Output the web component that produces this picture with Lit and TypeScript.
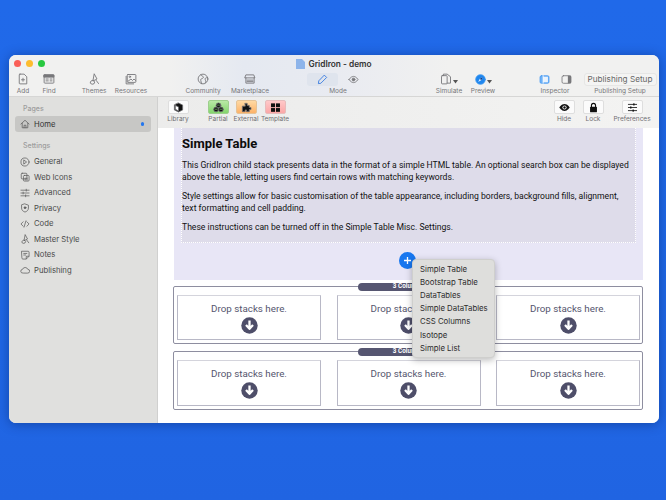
import { LitElement, html, css, svg } from "lit";
import { customElement } from "lit/decorators.js";

const ic = (body: unknown, size = 12, cls = "ic") => html`<svg class=${cls} width=${size} height=${size} viewBox="0 0 16 16" fill="none" stroke="currentColor" stroke-width="1.2" stroke-linecap="round" stroke-linejoin="round">${body}</svg>`;

const icons: Record<string, unknown> = {
  add: svg`<path d="M4 1.500h5.500L13 5v9.500H4a1 1 0 0 1-1-1v-11a1 1 0 0 1 1-1z"/><path d="M8 7v4M6 9h4"/>`,
  find: svg`<rect x="1.500" y="2.500" width="13" height="11" rx="1"/><rect x="1.500" y="2.500" width="13" height="3" fill="currentColor"/><path d="M4 8h3M4 10.500h3M9.500 8H12M9.500 10.500H12"/>`,
  themes: svg`<path d="M8.500 1.500 12 8l-5 2.500z"/><path d="M3 13a3 3 0 0 1 4-3l2 2a3 3 0 0 1-3 3z"/><path d="M11 10l3 4"/>`,
  resources: svg`<rect x="3" y="2" width="11.500" height="10.500" rx="1"/><path d="M1.500 4.500v10h10"/><circle cx="6.500" cy="5" r="1"/><path d="M4 11l4-3 2 2 2-2 2 2"/>`,
  community: svg`<circle cx="8" cy="8" r="6.500"/><path d="M5 2.500c1 2 4 1.500 3.500 3.500S4 7 5 10l1 4M14 6c-2 0-4 1-3 3s1 3 0 4"/>`,
  market: svg`<path d="M3 2.500h10l1.500 4H1.500z"/><path d="M2.500 6.500v7h11v-7"/><path d="M4 9.500h8M4 11.500h8"/>`,
  pencil: svg`<path d="M11 2l3 3-8.500 8.500L2 14l.500-3.500z"/>`,
  eye: svg`<path d="M1.500 8S4 3.500 8 3.500 14.500 8 14.500 8 12 12.500 8 12.500 1.500 8 1.500 8z"/><circle cx="8" cy="8" r="2" fill="currentColor"/>`,
  simulate: svg`<rect x="2" y="3.500" width="7.500" height="11" rx="1"/><path d="M4.500 3.500V1.500h5L14 5v8.500H9.500"/>`,
  general: svg`<circle cx="8" cy="8" r="6.500"/><path d="M6.500 5l4 3-4 3z"/>`,
  webicons: svg`<rect x="2" y="2" width="9" height="9" rx="1.500"/><rect x="5.500" y="5.500" width="9" height="9" rx="1.500"/><path d="M8 10h4M8 12.500h4"/>`,
  advanced: svg`<path d="M1.500 3.500h13M1.500 8h13M1.500 12.500h13"/><path d="M10 2v3M5 6.500v3M9 11v3"/>`,
  privacy: svg`<path d="M8 1.500l5.500 2v4.500c0 3.500-2.500 5.500-5.500 6.500-3-1-5.500-3-5.500-6.500V3.500z"/><circle cx="8" cy="7.500" r="1.500" fill="currentColor"/>`,
  code: svg`<path d="M5 4.500 1.500 8 5 11.500M11 4.500 14.500 8 11 11.500M9.500 3l-3 10"/>`,
  notes: svg`<path d="M3 2h10a1.500 1.500 0 0 1 1.500 1.500V10L10 14.500H4.500A1.500 1.500 0 0 1 3 13z"/><path d="M6 5.500h5M6 8h3M10 14v-4h4"/>`,
  cloud: svg`<path d="M4.500 13a3 3 0 0 1-.500-6A4.500 4.500 0 0 1 12.500 7a3 3 0 0 1 0 6z"/>`,
  home: svg`<path d="M1.500 8 8 2l6.500 6"/><path d="M3.500 7v7h9V7"/><path d="M6.500 14v-4h3v4"/>`,
  inspL: svg`<rect x="1.500" y="2.500" width="13" height="11" rx="2" fill="#6db1f7" stroke="#4c9df3"/><rect x="6" y="4" width="7" height="8" fill="#eaf3fd" stroke="none"/><path d="M6 2.500v11" stroke="#fff"/>`,
  inspR: svg`<rect x="1.500" y="2.500" width="13" height="11" rx="2"/><rect x="10" y="2.500" width="4.500" height="11" fill="currentColor" stroke="none"/>`,
  preview: svg`<circle cx="8" cy="8" r="7" fill="#1f86ee" stroke="#3f9af2"/><path d="M11.500 4.500 9 9 4.500 11.500 7 7z" fill="#dbeafe" stroke="none"/><path d="M11.500 4.500 9 9 7 7z" fill="#153e86" stroke="none"/>`,
};

const filled = {
  library: svg`<path d="M8 1.500 14 4.500v7l-6 3-6-3v-7z" fill="#111"/><path d="M3.500 5 8 7.200V13l-4.500-2.300z" fill="#fff"/>`,
  partial: svg`<circle cx="8" cy="4.800" r="3.400" fill="#111"/><circle cx="4.500" cy="10.800" r="3.500" fill="#111"/><circle cx="11.500" cy="10.800" r="3.500" fill="#111"/><path d="M6.500 4.500h3M3 10.500h3M10 10.500h3" stroke="#8fdc7c" stroke-width=".9"/>`,
  external: svg`<path d="M6 2h3v3h3v3h2.500v3H12v3H8v-2.500H6V14H2V6h4z" fill="#111"/>`,
  template: svg`<rect x="1.500" y="2" width="5.800" height="5.500" fill="#111" stroke="none"/><rect x="8.700" y="2" width="5.800" height="5.500" fill="#111" stroke="none"/><rect x="1.500" y="8.800" width="5.800" height="5.500" fill="#111" stroke="none"/><rect x="8.700" y="8.800" width="5.800" height="5.500" fill="#111" stroke="none"/>`,
  hide: svg`<path d="M.500 8S3.500 3 8 3s7.500 5 7.500 5-3 5-7.500 5S.500 8 .500 8z" fill="#111" stroke="none"/><circle cx="8" cy="8" r="3" fill="#fff" stroke="none"/><circle cx="8" cy="8" r="1.800" fill="#111" stroke="none"/>`,
  lock: svg`<rect x="3" y="7" width="10" height="8" rx="1" fill="#111" stroke="none"/><path d="M5 7V5a3 3 0 0 1 6 0v2" fill="none" stroke="#111" stroke-width="1.600"/>`,
  prefs: svg`<path d="M2 3.500h12M2 8h12M2 12.500h12" stroke="#111" stroke-width="1.200"/><rect x="9" y="2" width="2" height="3" fill="#111" stroke="none"/><rect x="4.500" y="6.500" width="2" height="3" fill="#111" stroke="none"/><rect x="8" y="11" width="2" height="3" fill="#111" stroke="none"/>`,
};

const nav: [string, string][] = [
  ["General", "general"],
  ["Web Icons", "webicons"],
  ["Advanced", "advanced"],
  ["Privacy", "privacy"],
  ["Code", "code"],
  ["Master Style", "themes"],
  ["Notes", "notes"],
  ["Publishing", "cloud"],
];

const menu = ["Simple Table", "Bootstrap Table", "DataTables", "Simple DataTables", "CSS Columns", "Isotope", "Simple List"];

@customElement("app-root")
export class AppRoot extends LitElement {
  static styles = css`
    :host { display: block; width: 666px; height: 500px; overflow: hidden; background: linear-gradient(180deg, #2069e9 0%, #2068e6 60%, #2064e2 100%); font-family: Inter, "Liberation Sans", sans-serif; }
    .page { padding: 55px 7px 0 9px; height: 500px; box-sizing: border-box; }
    .win { position: relative; height: 368px; border-radius: 7px; overflow: hidden; background: #fff; display: flex; flex-direction: column; box-shadow: 0 1px 12px rgba(5, 30, 90, .45); }
    .head { height: 42px; box-sizing: border-box; flex: none; background: linear-gradient(90deg, #f1f1f0 160px, #e5e9f1 235px, #e9ebf1 330px, #f1f1f0 440px); border-bottom: 1px solid #d6d6d5; position: relative; }
    .lights { position: absolute; left: 5px; top: 5px; display: flex; gap: 5px; }
    .lights i { width: 7px; height: 7px; border-radius: 50%; display: block; }
    .title { display: flex; justify-content: center; align-items: center; gap: 3px; height: 17px; font-size: 8.300px; font-weight: 600; color: #333; }
    .tools { display: grid; grid-template-columns: 28px 24px 13px 40px 34px 31px 48px 46px 34px 62px 65px 30px 4px 30px 32px 50px 80px; height: 24px; }
    .tool { display: flex; flex-direction: column; align-items: center; color: #77777a; font-size: 6.500px; white-space: nowrap; }
    .tool .box { height: 14px; display: flex; align-items: center; justify-content: center; color: #77777a; }
    .tool span { margin-top: 1px; line-height: 9px; }
    .seg { width: 31px; height: 13px; display: flex; align-items: center; justify-content: center; border-radius: 3px; }
    .seg.act { background: #dfe4ed; color: #2a72e0; }
    .pub { width: 73px; height: 13px; box-sizing: border-box; border: 1px solid #e6e6e5; border-radius: 3px; background: #f4f4f3; font-size: 8.200px; line-height: 11px; color: #666; text-align: center; }
    .main { flex: 1; display: flex; min-height: 0; }
    .side { width: 149px; box-sizing: border-box; flex: none; background: #e0e0de; border-right: 1px solid #d0d0cf; padding: 7px 6px 0 6px; color: #444; font-size: 7.700px; }
    .sec { font-size: 7px; font-weight: 500; color: #9c9c9c; padding-left: 8px; line-height: 10px; margin-bottom: 2px; }
    .sec.s2 { margin-top: 9px; margin-bottom: 3px; }
    .row { display: flex; align-items: center; gap: 4px; height: 15.500px; padding-left: 5px; color: #4a4a4a; }
    .row .ic { color: #5e5e5e; flex: none; }
    .row.on { height: 16px; background: #c7c7c5; border-radius: 3px; width: 136px; box-sizing: border-box; color: #333; }
    .dot { width: 3.500px; height: 3.500px; border-radius: 50%; background: #2477ee; margin-left: auto; margin-right: 7px; }
    .content { flex: 1; min-width: 0; display: flex; flex-direction: column; position: relative; }
    .bar { height: 31px; flex: none; background: linear-gradient(90deg, #ececeb, #f3f3f2); display: grid; grid-template-columns: 40px 6px 28px 28px 30px 1fr 30px 28px 50px; padding-right: 2px; }
    .bt { display: flex; flex-direction: column; align-items: center; font-size: 6.500px; color: #6f6f72; padding-top: 3px; white-space: nowrap; }
    .bt span { line-height: 9px; margin-top: 1px; }
    .bt .b { width: 21px; height: 14px; border-radius: 2px; background: #fbfbfb; border: 1px solid #dedede; box-sizing: border-box; display: flex; align-items: center; justify-content: center; }
    .bt .g { background: linear-gradient(#b9e9a6, #83d56c); border-color: #9dcf8c; }
    .bt .o { background: linear-gradient(#ffd9a3, #fdb268); border-color: #e5c397; }
    .bt .p { background: linear-gradient(#ffc9c9, #fba7a7); border-color: #e6bcbc; }
    .page-body { flex: 1; background: #fff; padding: 0 16px; min-height: 0; font-family: Roboto, "Liberation Sans", sans-serif; }
    .hero { background: #e8e6f6; height: 152px; padding: 0 7px; position: relative; }
    .dotted { background: #dedcea; height: 115px; box-sizing: border-box; border: 1px dotted #fff; border-top: 0; padding: 6px 0 0 0; color: #111; font-size: 8.600px; line-height: 11.500px; }
    .dotted h2 { margin: 0 0 6px 0; font-size: 13px; line-height: 20px; font-weight: 700; color: #0c0c0c; }
    .dotted p { margin: 0 0 8px 0; white-space: nowrap; }
    .plus { position: absolute; left: 225px; top: 124px; width: 17px; height: 17px; border-radius: 50%; background: #1877ef; display: flex; align-items: center; justify-content: center; }
    .grid { position: relative; margin: 6px 0 0 -1px; width: 470px; border: 1px solid #8e8ea0; border-radius: 2px; padding: 8px 3px 3px 3px; display: grid; grid-template-columns: 144px 144px 144px; column-gap: 15.500px; height: 58px; box-sizing: border-box; }
    .grid.two { margin-top: 7px; height: 59px; }
    .cell { border: 1px solid #b8b8c6; border-top-color: #d4d4dc; display: flex; flex-direction: column; align-items: center; padding-top: 7px; box-sizing: border-box; color: #55556e; font-size: 9.800px; line-height: 12px; }
    .cell svg { margin-top: 2px; }
    .pill { position: absolute; left: 184px; top: -4px; width: 100px; height: 7.500px; border-radius: 4px; background: #565671; color: #fff; font-size: 6.300px; font-weight: 700; line-height: 7.500px; text-align: center; }
    .menu { position: absolute; left: 254px; top: 162px; width: 83px; height: 99px; box-sizing: border-box; border-radius: 4px; background: #dededc; box-shadow: 0 2px 7px rgba(0,0,0,.28); border: 1px solid #cfcfcd; padding: 2.500px 0 0 7px; font-size: 7.800px; line-height: 13.200px; color: #2c2c2c; white-space: nowrap; }
  `;

  private tool(label: string, icon: unknown, extra: unknown = "") {
    return html`<div class="tool"><div class="box">${icon}${extra}</div><span>${label}</span></div>`;
  }

  private btn(label: string, cls: string, body: unknown) {
    return html`<div class="bt"><div class="b ${cls}">${ic(body, 11)}</div><span>${label}</span></div>`;
  }

  private arrow() {
    return html`<svg width="17" height="17" viewBox="0 0 17 17"><circle cx="8.500" cy="8.500" r="8.200" fill="#4e4e69"/><path d="M8.500 3.500v8M5 8l3.500 3.800L12 8" fill="none" stroke="#fff" stroke-width="2.300" stroke-linejoin="round"/></svg>`;
  }

  private grid(two = false) {
    const cell = html`<div class="cell">Drop stacks here.${this.arrow()}</div>`;
    return html`<div class="grid ${two ? "two" : ""}"><div class="pill">3 Columns</div>${cell}${cell}${cell}</div>`;
  }

  render() {
    const caret = html`<svg width="5" height="4" viewBox="0 0 5 4" style="margin:5px 0 0 1px"><path d="M0 0h5L2.500 3.500z" fill="#555"/></svg>`;
    return html`<div class="page"><div class="win">
      <div class="head">
        <div class="lights"><i style="background:#fa5f57"></i><i style="background:#fdbc2e"></i><i style="background:#28c840"></i></div>
        <div class="title"><svg width="9" height="10" viewBox="0 0 9 10"><path d="M0 0h6l3 3v7H0z" fill="#8db4ea"/></svg>GridIron - demo</div>
        <div class="tools">
          ${this.tool("Add", ic(icons.add))}
          ${this.tool("Find", ic(icons.find))}
          <div></div>
          ${this.tool("Themes", ic(icons.themes))}
          ${this.tool("Resources", ic(icons.resources))}
          <div></div>
          ${this.tool("Community", ic(icons.community))}
          ${this.tool("Marketplace", ic(icons.market))}
          <div></div>
          ${this.tool("Mode", html`<div class="seg act">${ic(icons.pencil, 11)}</div><div class="seg">${ic(icons.eye, 11)}</div>`)}
          <div></div>
          ${this.tool("Simulate", ic(icons.simulate), caret)}
          <div></div>
          ${this.tool("Preview", ic(icons.preview, 11), caret)}
          <div></div>
          ${this.tool("Inspector", html`${ic(icons.inspL, 11)}<div style="width:11px"></div>${ic(icons.inspR, 11)}`)}
          ${this.tool("Publishing Setup", html`<div class="pub">Publishing Setup</div>`)}
        </div>
      </div>
      <div class="main">
        <div class="side">
          <div class="sec">Pages</div>
          <div class="row on">${ic(icons.home, 10)}<span>Home</span><i class="dot"></i></div>
          <div class="sec s2">Settings</div>
          ${nav.map(([t, i]) => html`<div class="row">${ic(icons[i], 10)}<span>${t}</span></div>`)}
        </div>
        <div class="content">
          <div class="bar">
            ${this.btn("Library", "", filled.library)}
            <div></div>
            ${this.btn("Partial", "g", filled.partial)}
            ${this.btn("External", "o", filled.external)}
            ${this.btn("Template", "p", filled.template)}
            <div></div>
            ${this.btn("Hide", "", filled.hide)}
            ${this.btn("Lock", "", filled.lock)}
            ${this.btn("Preferences", "", filled.prefs)}
          </div>
          <div class="page-body">
            <div class="hero">
              <div class="dotted">
                <h2>Simple Table</h2>
                <p>This GridIron child stack presents data in the format of a simple HTML table. An optional search box can be displayed<br>above the table, letting users find certain rows with matching keywords.</p>
                <p>Style settings allow for basic customisation of the table appearance, including borders, background fills, alignment,<br>text formatting and cell padding.</p>
                <p>These instructions can be turned off in the Simple Table Misc. Settings.</p>
              </div>
              <div class="plus"><svg width="9" height="9" viewBox="0 0 9 9"><path d="M4.500 1v7M1 4.500h7" stroke="#fff" stroke-width="1.300"/></svg></div>
            </div>
            ${this.grid()}
            ${this.grid(true)}
          </div>
          <div class="menu">${menu.map((m) => html`<div>${m}</div>`)}</div>
        </div>
      </div>
    </div></div>`;
  }
}
